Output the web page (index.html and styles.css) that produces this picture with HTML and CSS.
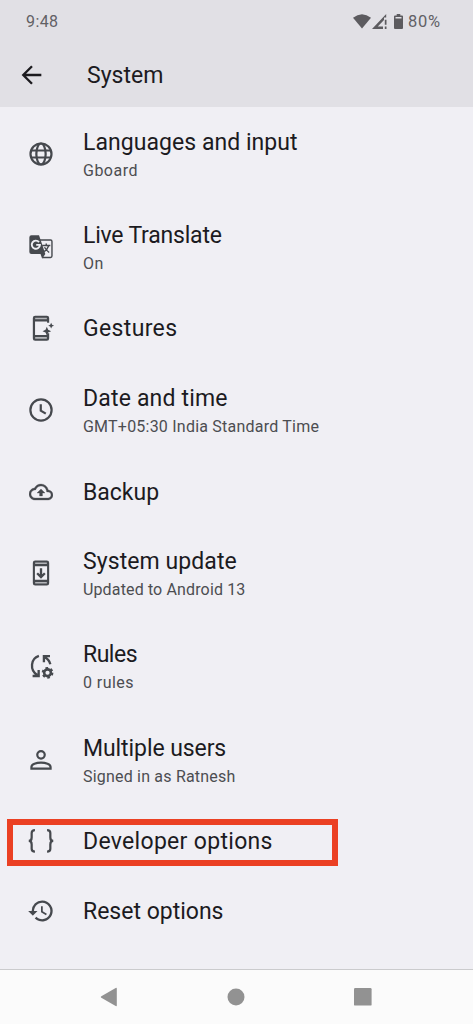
FILE: index.html
```html
<!DOCTYPE html>
<html lang="en">
<head>
<meta charset="utf-8">
<title>System</title>
<link rel="stylesheet" href="styles.css">
</head>
<body>
<div class="phone">
  <header class="header">
    <div class="status">
      <span class="clock">9:48</span>
      <div class="indicators">
        <svg class="wifi" width="18" height="15" viewBox="0 0 18 15"><path d="M0 3.800Q9-3.400 18 3.800L9 14.600Z"/></svg>
        <svg class="signal" width="16" height="15" viewBox="0 0 16 15"><path d="M0 15 14.200 0V3.600H12V6L5.800 12.500H11V15ZM12.800 5.800h1.700v5h-1.700zM12.800 12.600h1.700V15h-1.700z"/></svg>
        <svg class="battery" width="9" height="15" viewBox="0 0 9 15"><path fill-rule="evenodd" d="M2.700 0h3.600v1.400H8q1 0 1 1V14q0 1-1 1H1q-1 0-1-1V2.400q0-1 1-1h1.700zM1.500 2.900v1.700h6V2.900z"/></svg>
        <span class="percent">80%</span>
      </div>
    </div>
    <div class="toolbar">
      <svg class="back" width="28" height="28" viewBox="0 0 24 24"><path d="M20 12H5M12 4.500 4.500 12l7.500 7.500"/></svg>
      <h1 class="heading">System</h1>
    </div>
  </header>
  <main class="list">
    <div class="row tall">
      <svg class="icon line" viewBox="0 0 24 24"><circle cx="12" cy="12" r="9"/><ellipse cx="12" cy="12" rx="4" ry="9"/><path d="M3.500 9h17M3.500 15h17"/></svg>
      <div class="text"><div class="title t-lang">Languages and input</div><div class="sub s-lang">Gboard</div></div>
    </div>
    <div class="row tall">
      <svg class="icon" viewBox="0 0 24 24"><path class="thin" d="M11 6h9.200q1.200 0 1.200 1.200v12.600q0 1.200-1.200 1.200H13.500"/><path d="M3.800 2h6.500l1.400 4 4 12L13 22l-1.400-4H3.800Q2 18 2 16.200V3.800Q2 2 3.800 2z"/><path class="thin" d="M13 10.700h7M16.500 9v1.700M18.700 10.700q-1.200 3.500-4 5.300M15 12.200q1.400 2.500 4 4.500"/><path class="knock" d="M10.300 7.800A3.500 3.500 0 1 0 11.100 10.200H7.900"/></svg>
      <div class="text"><div class="title t-live">Live Translate</div><div class="sub s-live">On</div></div>
    </div>
    <div class="row">
      <svg class="icon" viewBox="0 0 24 24"><path d="M7 1.500h10q2 0 2 2v4h-1.800V6.500H6.900v11.500h10.300v-1.500H19v4.500q0 2-2 2H7q-2 0-2-2v-17.500q0-2 2-2z"/><path class="pale" d="M7 3.300h10v1.300H7zM7 19.700h10v1.500H7z"/><path d="m17 11 1.100 2.600 2.600 1.100-2.600 1.100-1.100 2.600-1.100-2.600-2.600-1.100 2.600-1.100zM20.700 7.500l.8 1.700 1.700.8-1.700.8-.8 1.700-.8-1.700-1.700-.8 1.700-.8z"/></svg>
      <div class="text"><div class="title t-gest">Gestures</div></div>
    </div>
    <div class="row tall">
      <svg class="icon line" viewBox="0 0 24 24"><circle cx="12" cy="12" r="9.100"/><path d="M11.800 7v5.500l4.300 2.600"/></svg>
      <div class="text"><div class="title t-date">Date and time</div><div class="sub s-date">GMT+05:30 India Standard Time</div></div>
    </div>
    <div class="row">
      <svg class="icon cloud" viewBox="0 0 24 24"><path class="bold" d="M19.350 10.040A7.490 7.490 0 0 0 12 4C9.110 4 6.600 5.640 5.350 8.040A5.994 5.994 0 0 0 0 14c0 3.310 2.690 6 6 6h13c2.760 0 5-2.240 5-5 0-2.640-2.050-4.780-4.650-4.960zM19 18H6c-2.210 0-4-1.790-4-4 0-2.050 1.530-3.760 3.560-3.970l1.070-.11.500-.95A5.469 5.469 0 0 1 12 6c2.620 0 4.880 1.860 5.390 4.430l.300 1.500 1.530.110A2.980 2.980 0 0 1 22 15c0 1.650-1.350 3-3 3zM8 13h2.550v3h2.900v-3H16l-4-4z"/></svg>
      <div class="text"><div class="title">Backup</div></div>
    </div>
    <div class="row tall">
      <svg class="icon" viewBox="0 0 24 24"><path fill-rule="evenodd" d="M7 1.200h10q2 0 2 2v17.600q0 2-2 2H7q-2 0-2-2V3.200q0-2 2-2zM6.800 6.200v11.600h10.400V6.200z"/><path class="pale" d="M7 3h10v1.300H7zM7 19.700h10V21H7z"/><path class="stroke" d="M12 8v7M8.700 12.200 12 15.500l3.300-3.300"/></svg>
      <div class="text"><div class="title t-upd">System update</div><div class="sub s-upd">Updated to Android 13</div></div>
    </div>
    <div class="row tall">
      <svg class="icon" viewBox="0 0 24 24"><path class="stroke" d="M10.200 3.400C3 5.800 2.200 15.500 8.700 19.700M4.800 20.600h5.200v-5.200M20 10.500A9 9 0 0 0 15 4.400M19.700 3.500h-5.200v5.200"/><circle class="gear" cx="17.600" cy="17.800" r="2.900"/><circle class="teeth" cx="17.600" cy="17.800" r="4.200"/></svg>
      <div class="text"><div class="title t-rule">Rules</div><div class="sub s-rule">0 rules</div></div>
    </div>
    <div class="row tall">
      <svg class="icon line" viewBox="0 0 24 24"><circle cx="12" cy="7.600" r="3.200"/><path d="M3.800 19.400v-1.400C3.800 15.600 8 14.300 12 14.300s8.200 1.300 8.200 3.700v1.400z"/></svg>
      <div class="text"><div class="title t-user">Multiple users</div><div class="sub s-user">Signed in as Ratnesh</div></div>
    </div>
    <div class="row">
      <svg class="icon line" viewBox="0 0 24 24"><path d="M6.800 2.700Q4 2.700 4 5.200v3.700q0 3-2.500 3 2.500 0 2.500 3v3.700q0 2.500 2.800 2.500M17.200 2.700q2.800 0 2.800 2.500v3.700q0 3 2.500 3-2.500 0-2.500 3v3.700q0 2.500-2.800 2.500"/></svg>
      <div class="text"><div class="title t-dev">Developer options</div></div>
      <div class="highlight"></div>
    </div>
    <div class="row">
      <svg class="icon" viewBox="0 0 24 24"><path d="M13 3a9 9 0 0 0-9 9H1l3.890 3.890.070.140L9 12H6a7 7 0 1 1 2.060 4.940l-1.420 1.420A9 9 0 1 0 13 3zm-1 5v5l4.280 2.540.720-1.210-3.500-2.080V8z"/></svg>
      <div class="text"><div class="title">Reset options</div></div>
    </div>
  </main>
  <nav class="nav">
    <svg width="18" height="20" viewBox="0 0 18 20"><path d="M1.300 9.300 15.700 1q1.100-.5 1.100.7v16.600q0 1.200-1.100.7L1.300 10.700q-1.200-.7 0-1.400z"/></svg>
    <svg width="18" height="18" viewBox="0 0 18 18"><circle cx="9" cy="9" r="8.500"/></svg>
    <svg width="18" height="18" viewBox="0 0 18 18"><rect width="17.600" height="17.600" rx="1.200"/></svg>
  </nav>
</div>
</body>
</html>
```
FILE: styles.css
```css
* { box-sizing: border-box; }
body { margin: 0; background: #f0eff4; font-family: Roboto, sans-serif; color: #1c1b1f; }
.phone { width: 473px; height: 1024px; display: flex; flex-direction: column; overflow: hidden; }
.header { height: 107px; background: #e1e0e5; flex: none; }
.status { height: 43px; padding: 0 32px 0 26px; display: flex; align-items: center; justify-content: space-between; color: #626165; font-size: 16px; }
.clock { letter-spacing: 0.4px; }
.indicators { display: flex; align-items: center; fill: #5c5b5f; }
.signal { margin-left: 1px; }
.battery { margin-left: 6px; }
.percent { margin-left: 4.500px; font-size: 16.500px; letter-spacing: 0.8px; }
.toolbar { height: 64px; padding-left: 18px; display: flex; align-items: center; }
.back { fill: none; stroke: #1c1b1f; stroke-width: 2; }
.heading { margin: 0 0 0 41px; font-size: 23px; font-weight: 400; }
.list { flex: 1; }
.row { position: relative; height: 70px; padding-left: 27.400px; display: flex; align-items: center; }
.row.tall { height: 93.200px; }
.icon { width: 28px; height: 28px; flex: none; fill: #46494e; }
.icon.line { fill: none; stroke: #46494e; stroke-width: 1.900; }
.icon.cloud { width: 24px; height: 24px; margin: 0 2px; }
.bold { stroke: #46494e; stroke-width: 0.300; }
.stroke { fill: none; stroke: #46494e; stroke-width: 2; }
.gear { fill: none; stroke: #46494e; stroke-width: 2.200; }
.teeth { fill: none; stroke: #46494e; stroke-width: 1.700; stroke-dasharray: 2.200 2.198; }
.thin { fill: none; stroke: #46494e; stroke-width: 1.200; }
.knock { fill: none; stroke: #f0eff4; stroke-width: 1.600; }
.pale { fill: #b4b5b9; }
.text { margin-left: 27.600px; padding-top: 2px; white-space: nowrap; }
.title { font-size: 23px; line-height: 30px; }
.sub { font-size: 16px; line-height: 22px; margin-top: 2px; color: #4c4d51; letter-spacing: 0.200px; }
.t-lang { letter-spacing: 0.050px; }
.t-live { letter-spacing: -0.200px; }
.t-gest { letter-spacing: 0.350px; }
.t-date { letter-spacing: 0.180px; }
.t-upd { letter-spacing: 0.080px; }
.t-rule { letter-spacing: -0.500px; }
.t-user { letter-spacing: -0.080px; }
.t-dev { letter-spacing: 0.310px; }
.s-lang { letter-spacing: 0.500px; }
.s-live { letter-spacing: 0.600px; }
.s-date { letter-spacing: 0.220px; }
.s-upd { letter-spacing: 0.140px; }
.s-rule { letter-spacing: 0.430px; }
.highlight { position: absolute; left: 7px; top: 13px; width: 331px; height: 47px; border: 6px solid #eb4023; }
.nav { height: 55px; border-top: 1px solid #cbcbcd; background: #fbfbfb; display: flex; align-items: center; justify-content: space-between; padding: 0 101px 1px 100px; fill: #929292; }
```
